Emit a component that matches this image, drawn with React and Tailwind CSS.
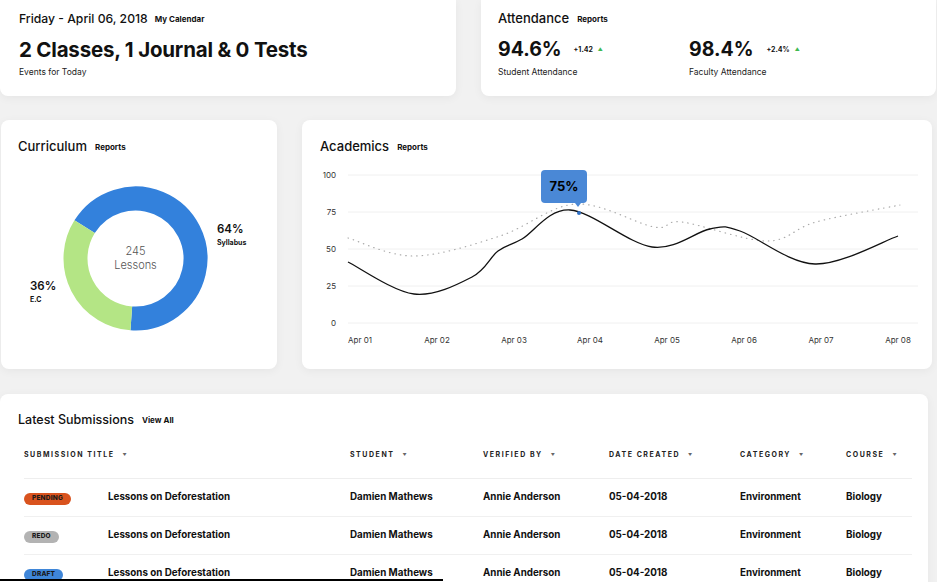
import React from 'react';

function smooth(pts) {
  let d = `M${pts[0][0]},${pts[0][1]}`;
  for (let i = 0; i < pts.length - 1; i++) {
    const p0 = pts[i - 1] || pts[i];
    const p1 = pts[i];
    const p2 = pts[i + 1];
    const p3 = pts[i + 2] || p2;
    const c1 = [p1[0] + (p2[0] - p0[0]) / 6, p1[1] + (p2[1] - p0[1]) / 6];
    const c2 = [p2[0] - (p3[0] - p1[0]) / 6, p2[1] - (p3[1] - p1[1]) / 6];
    d += ` C${c1[0].toFixed(1)},${c1[1].toFixed(1)} ${c2[0].toFixed(1)},${c2[1].toFixed(1)} ${p2[0]},${p2[1]}`;
  }
  return d;
}

function arc(cx, cy, r, a0, a1) {
  const rad = (a) => (a * Math.PI) / 180;
  const x0 = cx + r * Math.sin(rad(a0));
  const y0 = cy - r * Math.cos(rad(a0));
  const x1 = cx + r * Math.sin(rad(a1));
  const y1 = cy - r * Math.cos(rad(a1));
  const large = a1 - a0 > 180 ? 1 : 0;
  return `M${x0.toFixed(2)},${y0.toFixed(2)} A${r},${r} 0 ${large} 1 ${x1.toFixed(2)},${y1.toFixed(2)}`;
}

const solid = [[46, 102], [112, 134], [170, 117], [196, 91], [220, 79], [268, 50], [350, 87], [408, 69], [438, 71], [513, 104], [596, 76]];
const dotted = [[46, 78], [112, 96], [198, 76], [274, 44], [352, 67], [380, 62], [465, 81], [514, 62], [598, 45]];
const grid = [[100, 15], [75, 52], [50, 89], [25, 126], [0, 163]];
const days = [['Apr 01', 58], ['Apr 02', 135], ['Apr 03', 212], ['Apr 04', 288], ['Apr 05', 365], ['Apr 06', 442], ['Apr 07', 519], ['Apr 08', 596]];

const rows = [
  { status: 'PENDING', badge: 'bg-[#d9531e]' },
  { status: 'REDO', badge: 'bg-[#b3b3b3]' },
  { status: 'DRAFT', badge: 'bg-[#3f86d8]' },
];

const cols = 'grid grid-cols-[84px_242px_133px_126px_131px_106px_1fr] items-center';

function Up() {
  return <span className="ml-[5px] text-[5px] text-[#3fb950]">▲</span>;
}

function Sort() {
  return <span className="ml-[8px] text-[4px] text-[#666]">▼</span>;
}

function Title({ title, link, size = 'text-[13px]' }) {
  return (
    <div className="flex items-center">
      <span className={`${size} font-medium text-[#111]`}>{title}</span>
      <span className="ml-[8px] text-[8px] font-bold text-[#111]">{link}</span>
    </div>
  );
}

export default function App() {
  return (
    <div className="relative w-[937px] h-[582px] overflow-hidden bg-[#f1f1f1] font-['Inter',sans-serif] text-[#111]">
      {/* top row */}
      <div className="flex h-[96px]">
        <div className="w-[456px] rounded-b-lg bg-white shadow-[0_2px_10px_rgba(0,0,0,0.05)] pl-[19px] pt-[11px]">
          <div className="h-[16px] flex items-center">
            <span className="text-[12.2px] font-medium">Friday - April 06, 2018</span>
            <span className="ml-[7px] text-[8px] font-bold">My Calendar</span>
          </div>
          <div className="mt-[10px] h-[26px] flex items-center text-[20.5px] font-bold tracking-[-0.01em]">2 Classes, 1 Journal &amp; 0 Tests</div>
          <div className="mt-[3px] text-[8.5px] leading-[12px] text-[#222]">Events for Today</div>
        </div>
        <div className="ml-[25px] w-[455px] rounded-b-lg bg-white shadow-[0_2px_10px_rgba(0,0,0,0.05)] pl-[17px] pt-[11px]">
          <div className="h-[16px] flex items-center">
            <span className="text-[13px] font-medium">Attendance</span>
            <span className="ml-[8px] text-[8px] font-bold">Reports</span>
          </div>
          <div className="mt-[10px] flex">
            <div className="w-[191px]">
              <div className="h-[26px] flex items-center">
                <span className="text-[19.5px] font-bold">94.6%</span>
                <span className="ml-[12px] text-[7px] font-bold">+1.42</span>
                <Up />
              </div>
              <div className="mt-[3px] text-[8.5px] leading-[12px] text-[#222]">Student Attendance</div>
            </div>
            <div>
              <div className="h-[26px] flex items-center">
                <span className="text-[19.5px] font-bold">98.4%</span>
                <span className="ml-[13px] text-[7px] font-bold">+2.4%</span>
                <Up />
              </div>
              <div className="mt-[3px] text-[8.5px] leading-[12px] text-[#222]">Faculty Attendance</div>
            </div>
          </div>
        </div>
      </div>

      {/* middle row */}
      <div className="mt-[24px] flex h-[249px]">
        <div className="ml-[1px] w-[276px] rounded-lg bg-white shadow-[0_2px_10px_rgba(0,0,0,0.05)] pl-[17px] pt-[17px]">
          <Title title="Curriculum" link="Reports" />
          <div className="mt-[29px] flex items-start pl-[12px]">
            <div className="w-[33px] pt-[93px]">
              <div className="text-[11.5px] font-semibold leading-[14px]">36%</div>
              <div className="mt-[2px] text-[7px] font-bold">E.C</div>
            </div>
            <div className="relative w-[145px] h-[145px]">
              <svg width="145" height="145" viewBox="0 0 145 145">
                <path d={arc(72.5, 72.5, 60, 302, 544)} fill="none" stroke="#3381dc" strokeWidth="24" />
                <path d={arc(72.5, 72.5, 60, 184, 302)} fill="none" stroke="#b4e585" strokeWidth="24" />
              </svg>
              <div className="absolute inset-0 flex flex-col items-center justify-center text-[11px] leading-[14px] text-[#555] font-light">
                <span>245</span>
                <span>Lessons</span>
              </div>
            </div>
            <div className="ml-[9px] pt-[36px]">
              <div className="text-[11.5px] font-semibold leading-[14px]">64%</div>
              <div className="mt-[2px] text-[7px] font-bold">Syllabus</div>
            </div>
          </div>
        </div>

        <div className="relative ml-[25px] w-[630px] rounded-lg bg-white shadow-[0_2px_10px_rgba(0,0,0,0.05)] pt-[17px]">
          <div className="pl-[18px]">
            <Title title="Academics" link="Reports" />
          </div>
          <svg className="mt-[3px]" width="630" height="195" viewBox="0 0 630 195">
            {grid.map(([v, y]) => (
              <g key={v}>
                <line x1="46" x2="616" y1={y} y2={y} stroke="#f0f0f0" strokeWidth="1" />
                <text x="34" y={y + 3} textAnchor="end" fontSize="8" fill="#333" fontFamily="Inter, sans-serif">{v}</text>
              </g>
            ))}
            {days.map(([d, x]) => (
              <text key={d} x={x} y="183" textAnchor="middle" fontSize="8" fill="#333" fontFamily="Inter, sans-serif">{d}</text>
            ))}
            <path d={smooth(dotted)} fill="none" stroke="#aaa" strokeWidth="1.2" strokeDasharray="0.5 5" strokeLinecap="round" />
            <path d={smooth(solid)} fill="none" stroke="#111" strokeWidth="1.3" />
            <circle cx="277" cy="53" r="2" fill="#2f6fc4" />
          </svg>
          <div className="absolute left-[239px] top-[50px] w-[46px] h-[33px] rounded-[4px] bg-[#4a88d6] flex items-center justify-center text-[13px] font-bold text-black">
            75%
            <span className="absolute -bottom-[4px] left-[34px] w-0 h-0 border-x-[3px] border-x-transparent border-t-[4px] border-t-[#4a88d6]" />
          </div>
        </div>
      </div>

      {/* submissions */}
      <div className="mt-[25px] w-[928px] h-[200px] rounded-lg bg-white shadow-[0_2px_10px_rgba(0,0,0,0.05)] pt-[17px]">
        <div className="pl-[18px]">
          <Title title="Latest Submissions" link="View All" size="text-[12.5px]" />
        </div>
        <div className="ml-[24px] w-[888px] mt-[20px]">
          <div className={`${cols} pb-[18px] border-b border-[#eee] text-[7px] font-bold tracking-[0.22em] text-[#222] leading-[10px]`}>
            <div className="col-span-2 flex items-center">SUBMISSION TITLE<Sort /></div>
            <div className="flex items-center">STUDENT<Sort /></div>
            <div className="flex items-center">VERIFIED BY<Sort /></div>
            <div className="flex items-center">DATE CREATED<Sort /></div>
            <div className="flex items-center">CATEGORY<Sort /></div>
            <div className="flex items-center">COURSE<Sort /></div>
          </div>
          {rows.map((r) => (
            <div key={r.status} className={`${cols} h-[38px] border-b border-[#f0f0f0] text-[9.8px] font-bold text-[#111]`}>
              <div>
                <span className={`inline-flex h-[12px] items-center rounded-full px-[8px] text-[6.5px] font-extrabold tracking-[0.03em] text-[#1a1a1a] ${r.badge}`}>{r.status}</span>
              </div>
              <div>Lessons on Deforestation</div>
              <div>Damien Mathews</div>
              <div>Annie Anderson</div>
              <div>05-04-2018</div>
              <div>Environment</div>
              <div>Biology</div>
            </div>
          ))}
        </div>
      </div>

      <div className="absolute left-0 top-[579px] w-[443px] h-[2px] bg-black" />
    </div>
  );
}
